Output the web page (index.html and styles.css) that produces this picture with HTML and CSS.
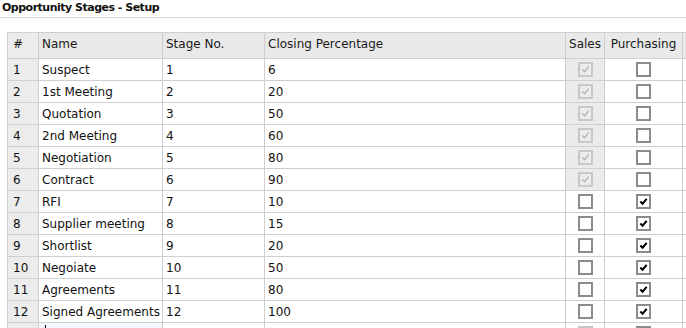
FILE: index.html
```html
<!DOCTYPE html>
<html lang="en">
<head>
  <meta charset="UTF-8">
  <title>Opportunity Stages - Setup</title>
  <link rel="stylesheet" href="styles.css">
</head>
<body>
  <div class="window">
    <h1 class="title">Opportunity Stages - Setup</h1>
    <div class="grid-wrap">
      <table class="grid">
        <colgroup>
          <col class="c-num"><col class="c-name"><col class="c-stage"><col class="c-close"><col class="c-sales"><col class="c-purch"><col class="c-extra">
        </colgroup>
        <thead>
          <tr>
            <th class="rowhead">#</th>
            <th>Name</th>
            <th>Stage No.</th>
            <th>Closing Percentage</th>
            <th class="center">Sales</th>
            <th class="center">Purchasing</th>
            <th></th>
          </tr>
        </thead>
        <tbody id="rows"></tbody>
      </table>
    </div>
  </div>
  <script>
    // name, stage no., closing %, sales, purchasing
    const stages = [
      ['Suspect', 1, 6, true, false],
      ['1st Meeting', 2, 20, true, false],
      ['Quotation', 3, 50, true, false],
      ['2nd Meeting', 4, 60, true, false],
      ['Negotiation', 5, 80, true, false],
      ['Contract', 6, 90, true, false],
      ['RFI', 7, 10, false, true],
      ['Supplier meeting', 8, 15, false, true],
      ['Shortlist', 9, 20, false, true],
      ['Negoiate', 10, 50, false, true],
      ['Agreements', 11, 80, false, true],
      ['Signed Agreements', 12, 100, false, true]
    ];

    const tick = '<svg viewBox="0 0 10 10"><path d="M1.5 5 L4 7.5 L8.5 2"/></svg>';

    function box(checked, disabled) {
      let cls = 'chk';
      if (disabled) cls += ' disabled';
      return '<span class="' + cls + '">' + (checked ? tick : '') + '</span>';
    }

    const body = document.getElementById('rows');
    let html = '';
    stages.forEach(function (s, i) {
      const salesLocked = s[3];
      html += '<tr>' +
        '<td class="rowhead">' + (i + 1) + '</td>' +
        '<td>' + s[0] + '</td>' +
        '<td>' + s[1] + '</td>' +
        '<td>' + s[2] + '</td>' +
        '<td class="center' + (salesLocked ? ' locked' : '') + '">' + box(s[3], salesLocked) + '</td>' +
        '<td class="center">' + box(s[4], false) + '</td>' +
        '<td></td>' +
        '</tr>';
    });
    // new empty row, name cell being edited
    html += '<tr class="new"><td class="rowhead"></td><td class="editing"><span class="caret"></span></td>' +
      '<td></td><td></td><td class="center">' + box(false, true) + '</td><td class="center">' + box(false, false) + '</td><td></td></tr>';
    body.innerHTML = html;
  </script>
</body>
</html>
```

FILE: styles.css
```css
* {
  box-sizing: border-box;
  margin: 0;
  padding: 0;
}
html, body {
  width: 686px;
  height: 328px;
  overflow: hidden;
  background: #fff;
}
body {
  font-family: 'DejaVu Sans', Tahoma, sans-serif;
  font-size: 12px;
  color: #111;
}
.title {
  font-family: 'DejaVu Sans', Tahoma, sans-serif;
  font-size: 11px;
  font-weight: bold;
  height: 18px;
  line-height: 16px;
  padding-left: 2px;
  border-bottom: 1px solid #d6d6d6;
  letter-spacing: -0.5px;
}
.grid-wrap {
  padding: 14px 0 0 7px;
}
.grid {
  border-collapse: collapse;
  table-layout: fixed;
  width: 706px;
}
.c-num { width: 31px; }
.c-name { width: 124px; }
.c-stage { width: 102px; }
.c-close { width: 301px; }
.c-sales { width: 39px; }
.c-purch { width: 78px; }
.c-extra { width: 31px; }
.grid th,
.grid td {
  border: 1px solid #cfcfcf;
  text-align: left;
  font-weight: normal;
  white-space: nowrap;
  overflow: hidden;
  padding: 0 3px;
}
.grid th {
  height: 26px;
  padding-bottom: 4px;
  background: #e9e9e9;
  color: #1a1a1a;
}
.grid td {
  height: 22px;
}
.grid .rowhead {
  background: #ececec;
  padding-left: 5px;
}
.grid .center {
  text-align: center;
  padding-left: 0;
  padding-right: 0;
}
.grid td.locked {
  background: #ebebeb;
}
.chk {
  display: inline-block;
  width: 15px;
  height: 15px;
  border: 2px solid #8c8c8c;
  background: #fff;
  vertical-align: middle;
  padding: 1px;
}
.chk svg {
  display: block;
  width: 9px;
  height: 9px;
  fill: none;
  stroke: #000;
  stroke-width: 2.2;
}
.chk.disabled {
  border-color: #c4c4c4;
}
.locked .chk {
  background: #ececec;
  border-color: #c8c8c8;
}
.locked .chk svg {
  stroke: #b4b4b4;
  stroke-width: 1.6;
}
.editing {
  background: #f2f8fd;
}
.caret {
  display: inline-block;
  width: 1px;
  height: 14px;
  background: #000;
  margin-left: 3px;
}
```
